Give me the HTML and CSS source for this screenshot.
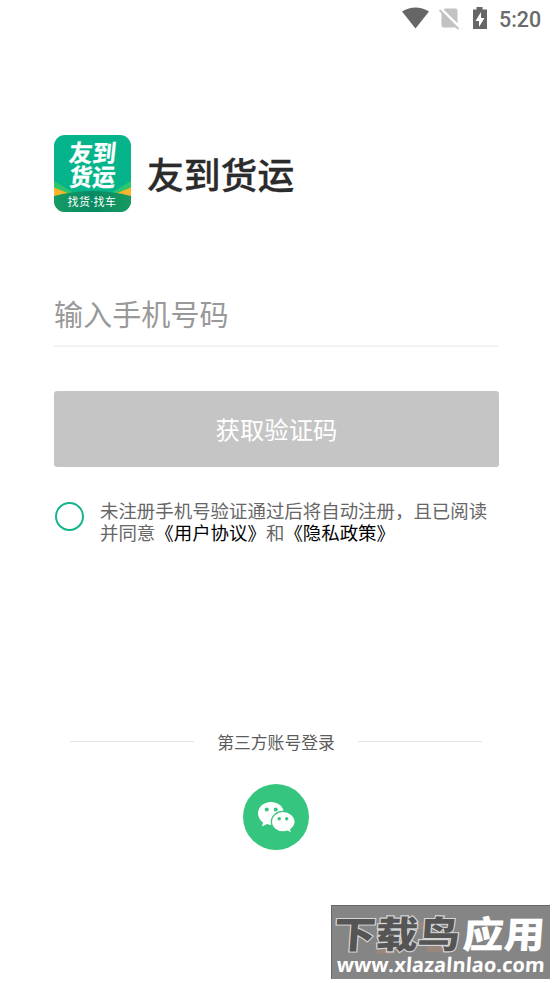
FILE: index.html
```html
<!DOCTYPE html>
<html lang="zh-CN">
<head>
<meta charset="utf-8">
<title>友到货运</title>
<link rel="stylesheet" href="styles.css">
</head>
<body>
<div class="status">
  <svg class="status-icons" width="92" height="30" viewBox="0 0 92 30">
    <path fill="#666" d="M0 11.500Q13.500 3.500 27 11.500L13.500 28.500Z"/>
    <path fill="#c2c2c2" d="M43 8.500H53.500Q55.500 8.500 55.500 10.500V23.300L41.500 9.500ZM39.500 12L54 27.500H41.500Q39.500 27.500 39.500 25.500Z"/>
    <path d="M37.500 10L56.500 29" stroke="#c2c2c2" stroke-width="1.800"/>
    <path fill="#666" d="M71 9.500H74.500V7H80.500V9.500H85V29H71Z"/>
    <path fill="#fff" d="M79 12L73.500 21H77V27L82.500 18H79Z"/>
  </svg>
  <span class="clock">5:20</span>
</div>
<main class="login">
  <header class="brand">
    <svg class="logo" width="77" height="77" viewBox="0 0 77 77">
      <defs>
        <clipPath id="tile"><rect width="77" height="77" rx="11"/></clipPath>
        <linearGradient id="hill" x1="0" x2="1" y1="0" y2="0">
          <stop offset="0" stop-color="#189a61"/><stop offset=".5" stop-color="#078a63"/><stop offset="1" stop-color="#189a61"/>
        </linearGradient>
      </defs>
      <g clip-path="url(#tile)">
        <rect width="77" height="77" fill="#05b48b"/>
        <path fill="#2fc66b" d="M0 46L20 58H0ZM77 46L57 58H77Z"/>
        <path fill="#f9b52c" d="M0 52.500L16 59L0 64ZM77 52.500L61 59L77 64Z"/>
        <path fill="url(#hill)" d="M0 61Q38.500 51 77 61V77H0Z"/>
      </g>
      <g class="logo-name" transform="skewX(-6)">
        <text x="17" y="26.700" textLength="47" lengthAdjust="spacingAndGlyphs">友到</text>
        <text x="20" y="51.500" textLength="46" lengthAdjust="spacingAndGlyphs">货运</text>
      </g>
      <text class="logo-sub" x="13.500" y="70.500" textLength="48.500">找货<tspan class="dot">·</tspan>找车</text>
    </svg>
    <h1 class="title">友到货运</h1>
  </header>
  <div class="phone">输入手机号码</div>
  <div class="submit">获取验证码</div>
  <div class="terms">
    <span class="check"></span>
    <p class="terms-text">未注册手机号验证通过后将自动注册，且已阅读<br>并同意<b>《用户协议》</b>和<b>《隐私政策》</b></p>
  </div>
</main>
<section class="third">
  <div class="divider"><i></i><span>第三方账号登录</span><i></i></div>
  <svg class="wechat" width="66" height="66" viewBox="0 0 66 66">
    <circle cx="33" cy="33" r="33" fill="#35c57e"/>
    <path fill="#fff" d="M28 18C20.500 18 15 23 15 29.500C15 33 17 36.500 20 38.500L19 42.500L24 40Q26 41 29 41C36 41 41 36 41 29.500C41 23 35.500 18 28 18Z"/>
    <path fill="#fff" stroke="#35c57e" stroke-width="1.300" d="M40 27.400C33.500 27.400 28.400 32 28.400 37.700C28.400 43.500 33.500 48 40 48Q42.500 48 44.500 47.200L48.800 49.400L47.800 45.400Q52.200 42 52.200 37.700C52.200 32 46.500 27.400 40 27.400Z"/>
    <g fill="#35c57e"><circle cx="23.700" cy="25.500" r="2"/><circle cx="32.700" cy="25.500" r="2"/><circle cx="36.200" cy="34.700" r="1.700"/><circle cx="43.700" cy="34.700" r="1.700"/></g>
  </svg>
</section>
<svg class="watermark" width="219" height="74" viewBox="0 0 219 74">
  <rect width="219" height="74" fill="#858585"/>
  <path d="M.5 74V.5H219" fill="none" stroke="#686868"/>
  <path d="M46 43L64 38V49H46ZM85 17H101V24H85ZM96 41H113V47H96Z" fill="#98877c"/>
  <g class="mark-name" transform="skewX(-4)">
    <text class="mark-dark" x="5" y="42.500" textLength="126" lengthAdjust="spacingAndGlyphs">下载鸟</text>
    <text class="mark-light" x="134" y="42.500" textLength="82" lengthAdjust="spacingAndGlyphs">应用</text>
  </g>
  <text class="mark-url" transform="skewX(-4)" x="10" y="67" textLength="208" lengthAdjust="spacingAndGlyphs">www.xlazalnlao.com</text>
</svg>
</body>
</html>
```
FILE: styles.css
```css
* { box-sizing: border-box; }
body {
  margin: 0;
  height: 983px;
  overflow: hidden;
  display: flex;
  flex-direction: column;
  background: #fff;
  font-family: "Noto Sans CJK SC", sans-serif;
}
.status {
  display: flex;
  justify-content: flex-end;
  height: 38px;
  padding-right: 12px;
}
.clock {
  width: 42px;
  margin-left: 5px;
  font: 500 21.4px/40px Roboto, sans-serif;
  color: #6a6a6a;
  white-space: nowrap;
}
.login { padding: 97px 54px 0; }
.brand {
  display: flex;
  align-items: center;
  gap: 16px;
  height: 77px;
}
.logo-name {
  font-size: 24px;
  font-weight: 700;
  fill: #fff;
  stroke: #fff;
  stroke-width: .3;
}
.logo-sub { font-size: 11px; fill: #fff; }
.dot { font-family: Roboto, sans-serif; }
.title {
  margin: 0;
  font-size: 36.8px;
  font-weight: 500;
  line-height: 77px;
  color: #2b2b2b;
  -webkit-text-stroke: .3px #2b2b2b;
}
.phone {
  height: 75px;
  margin-top: 60px;
  border-bottom: 2px solid #f3f3f3;
  font-size: 29.1px;
  line-height: 83px;
  color: #999;
  width: 444px;
}
.submit {
  width: 445px;
  height: 76px;
  margin-top: 44px;
  border-radius: 3px;
  background: #c5c5c5;
  color: #fff;
  font-size: 24.4px;
  line-height: 76px;
  text-align: center;
}
.terms {
  display: flex;
  gap: 16px;
  margin-top: 32px;
}
.check {
  width: 29px;
  height: 29px;
  margin: 3px 0 0 1px;
  border: 2px solid #14b48c;
  border-radius: 50%;
}
.terms-text {
  margin: 0;
  font-size: 18.45px;
  line-height: 22px;
  color: #666;
  white-space: nowrap;
}
.terms-text b { font-weight: 400; color: #000; }
.third {
  display: flex;
  flex-direction: column;
  align-items: center;
  width: 552px;
  margin-top: 187px;
}
.divider {
  display: flex;
  align-items: center;
  gap: 23px;
  height: 24px;
  font-size: 16.8px;
  line-height: 24px;
  color: #5c5c5c;
}
.divider i {
  width: 124px;
  height: 1px;
  margin-bottom: 2px;
  background: #e5e5e5;
}
.wechat { margin-top: 30px; }
.watermark {
  align-self: flex-end;
  flex: none;
  margin: 55px 3px 0 0;
}
.mark-name { font-size: 37px; font-weight: 900; }
.mark-dark {
  fill: #555;
  stroke: #d4d4d4;
  stroke-width: 2.2;
  paint-order: stroke;
}
.mark-light { fill: #fff; }
.mark-url {
  font: 700 20px "Open Sans", sans-serif;
  fill: #fff;
}
```
